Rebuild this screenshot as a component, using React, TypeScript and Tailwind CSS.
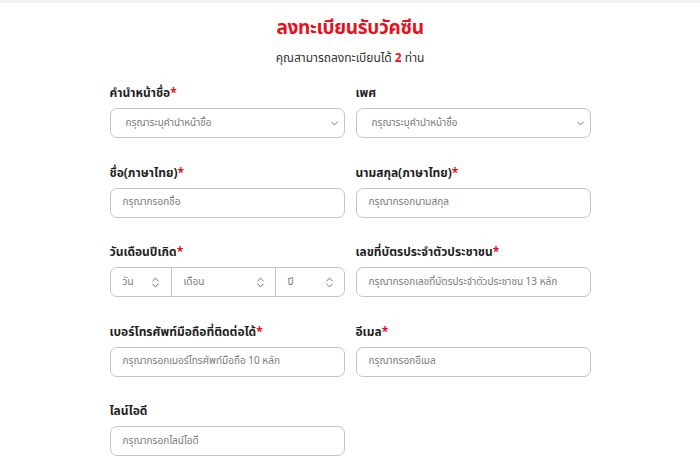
import React from "react";
import { ChevronDown, ChevronsUpDown } from "lucide-react";

const font = { fontFamily: '"Noto Sans Thai", "Noto Sans", "Liberation Sans", sans-serif' };

function Label({ text, req }: { text: string; req?: boolean }) {
  return (
    <div className="h-[18px] leading-[18px] text-[12px] font-bold text-[#1f1f1f] mb-[6px]">
      {text}
      {req && <span className="text-[#e8101a]">*</span>}
    </div>
  );
}

function Box({ children }: { children: React.ReactNode }) {
  return (
    <div className="h-[30px] border border-[#c4c4c4] rounded-[7px] flex items-center text-[10px] text-[#7a7a7a] bg-white">
      {children}
    </div>
  );
}

function TextField({ ph }: { ph: string }) {
  return (
    <Box>
      <span className="pl-[12px]">{ph}</span>
    </Box>
  );
}

function SelectField({ ph }: { ph: string }) {
  return (
    <Box>
      <span className="pl-[15px] flex-1">{ph}</span>
      <ChevronDown className="w-[11px] h-[11px] mr-[4px] text-[#666]" strokeWidth={2} />
    </Box>
  );
}

function DateField() {
  return (
    <Box>
      <div className="w-[61px] h-full flex items-center border-r border-[#c4c4c4]">
        <span className="pl-[12px] flex-1">วัน</span>
        <ChevronsUpDown className="w-[13px] h-[13px] mr-[9px] text-[#555]" strokeWidth={1.6} />
      </div>
      <div className="w-[104px] h-full flex items-center border-r border-[#c4c4c4]">
        <span className="pl-[12px] flex-1">เดือน</span>
        <ChevronsUpDown className="w-[13px] h-[13px] mr-[8px] text-[#555]" strokeWidth={1.6} />
      </div>
      <div className="flex-1 h-full flex items-center">
        <span className="pl-[12px] flex-1">ปี</span>
        <ChevronsUpDown className="w-[13px] h-[13px] mr-[8px] text-[#555]" strokeWidth={1.6} />
      </div>
    </Box>
  );
}

export default function App() {
  return (
    <div className="w-[700px] h-[475px] bg-white overflow-hidden" style={font}>
      <div className="h-[3px] bg-[#f3f3f3]" />
      <div className="text-center mt-[14px] text-[19px] leading-[24px] font-bold tracking-[-0.3px] text-[#e8101a]">
        ลงทะเบียนรับวัคซีน
      </div>
      <div className="text-center mt-[8px] text-[12px] leading-[18px] text-[#333]">
        คุณสามารถลงทะเบียนได้ <span className="text-[#e8101a] font-bold">2</span> ท่าน
      </div>
      <div className="w-[481px] mx-auto mt-[17px] grid grid-cols-2 gap-x-[11px] gap-y-[25.5px]">
        <div>
          <Label text="คำนำหน้าชื่อ" req />
          <SelectField ph="กรุณาระบุคำนำหน้าชื่อ" />
        </div>
        <div>
          <Label text="เพศ" />
          <SelectField ph="กรุณาระบุคำนำหน้าชื่อ" />
        </div>
        <div>
          <Label text="ชื่อ(ภาษาไทย)" req />
          <TextField ph="กรุณากรอกชื่อ" />
        </div>
        <div>
          <Label text="นามสกุล(ภาษาไทย)" req />
          <TextField ph="กรุณากรอกนามสกุล" />
        </div>
        <div>
          <Label text="วันเดือนปีเกิด" req />
          <DateField />
        </div>
        <div>
          <Label text="เลขที่บัตรประจำตัวประชาชน" req />
          <TextField ph="กรุณากรอกเลขที่บัตรประจำตัวประชาชน 13 หลัก" />
        </div>
        <div>
          <Label text="เบอร์โทรศัพท์มือถือที่ติดต่อได้" req />
          <TextField ph="กรุณากรอกเบอร์โทรศัพท์มือถือ 10 หลัก" />
        </div>
        <div>
          <Label text="อีเมล" req />
          <TextField ph="กรุณากรอกอีเมล" />
        </div>
        <div>
          <Label text="ไลน์ไอดี" />
          <TextField ph="กรุณากรอกไลน์ไอดี" />
        </div>
      </div>
    </div>
  );
}
